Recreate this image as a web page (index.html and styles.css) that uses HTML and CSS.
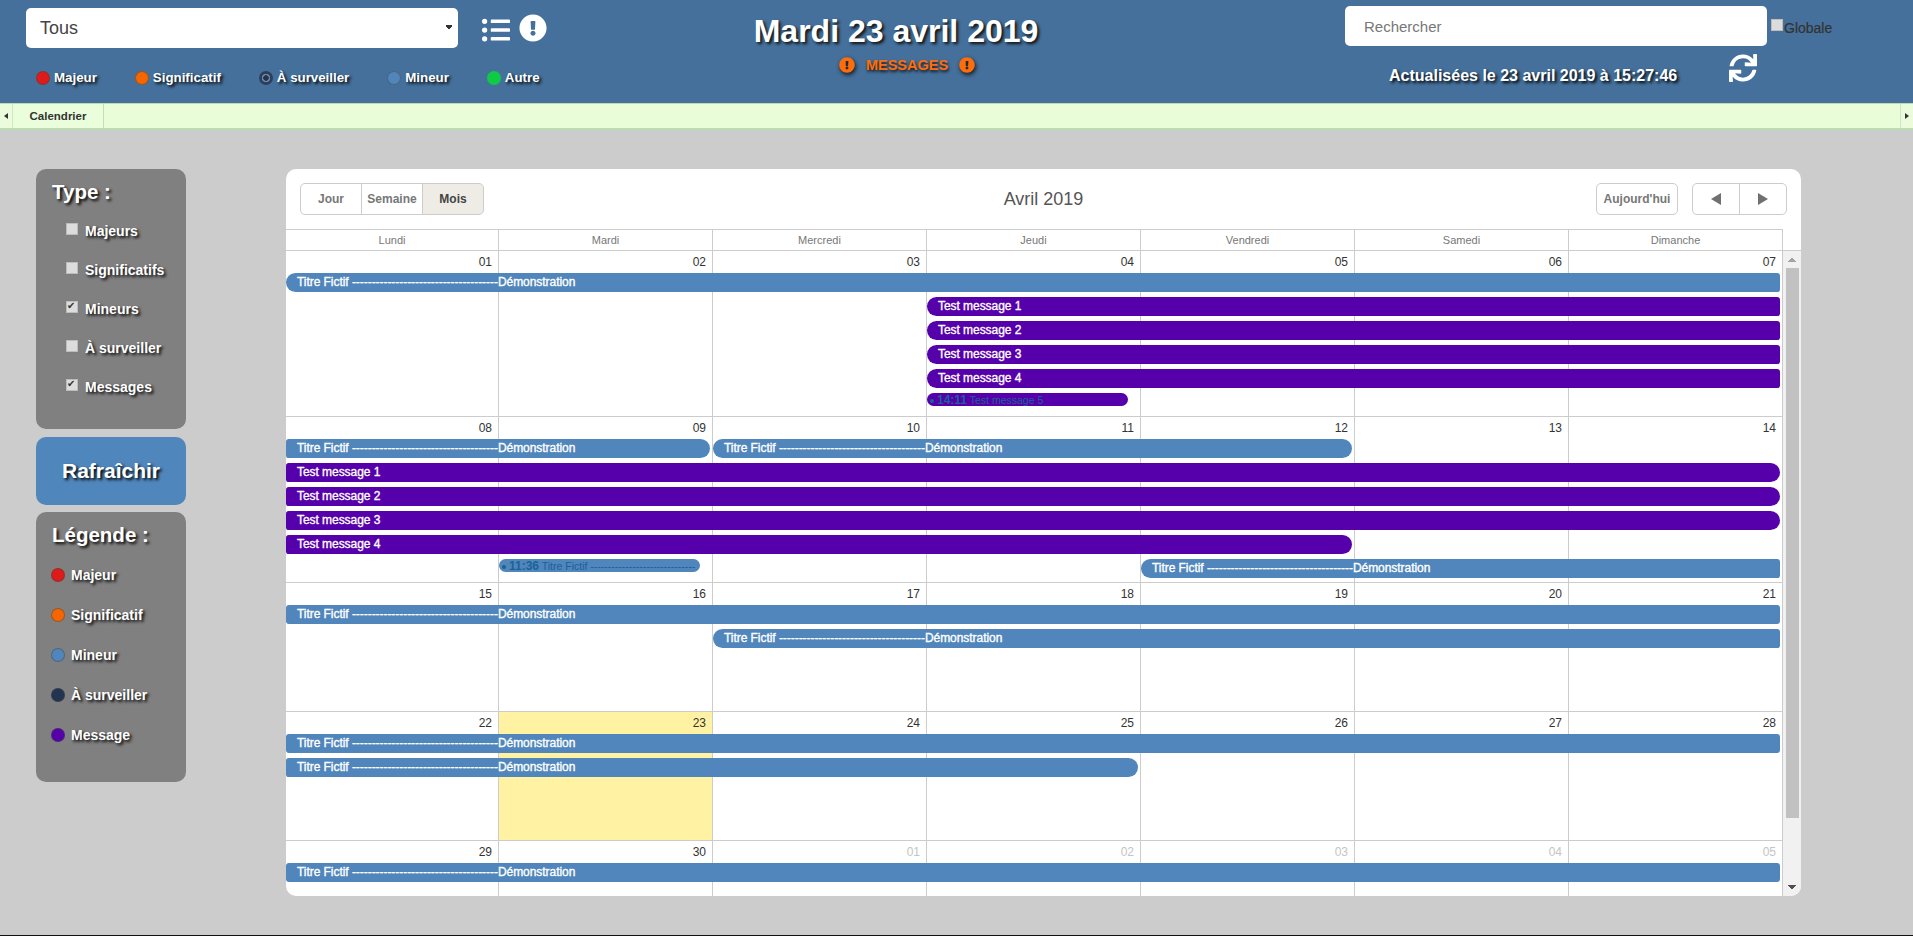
FILE: index.html
```html
<!DOCTYPE html>
<html lang="fr">
<head>
  <meta charset="UTF-8">
  <meta name="viewport" content="width=device-width, initial-scale=1.0">
  <title>Calendrier</title>
  <link rel="stylesheet" href="styles.css">
</head>
<body>
  <header class="topbar">
    <div class="top-left">
      <div class="filter-row">
        <select class="site-select">
          <option>Tous</option>
        </select>
        <svg class="top-icon list-icon" viewBox="0 0 512 512"><path d="M48 48a48 48 0 1 0 48 48 48 48 0 0 0-48-48zm0 160a48 48 0 1 0 48 48 48 48 0 0 0-48-48zm0 160a48 48 0 1 0 48 48 48 48 0 0 0-48-48zm448 16H176a16 16 0 0 0-16 16v32a16 16 0 0 0 16 16h320a16 16 0 0 0 16-16v-32a16 16 0 0 0-16-16zm0-320H176a16 16 0 0 0-16 16v32a16 16 0 0 0 16 16h320a16 16 0 0 0 16-16V80a16 16 0 0 0-16-16zm0 160H176a16 16 0 0 0-16 16v32a16 16 0 0 0 16 16h320a16 16 0 0 0 16-16v-32a16 16 0 0 0-16-16z"/></svg>
        <svg class="top-icon" viewBox="0 0 512 512"><path d="M504 256c0 136.997-111.043 248-248 248S8 392.997 8 256C8 119.083 119.043 8 256 8s248 111.083 248 248zm-248 50c-25.405 0-46 20.595-46 46s20.595 46 46 46 46-20.595 46-46-20.595-46-46-46zm-43.673-165.346l7.418 136c.347 6.364 5.609 11.346 11.982 11.346h48.546c6.373 0 11.635-4.982 11.982-11.346l7.418-136c.375-6.874-5.098-12.654-11.982-12.654h-63.383c-6.884 0-12.356 5.78-11.981 12.654z"/></svg>
      </div>
      <ul class="top-legend">
        <li><span class="dot dot-red"></span>Majeur</li>
        <li><span class="dot dot-orange"></span>Significatif</li>
        <li><span class="dot dot-watch"></span>À surveiller</li>
        <li><span class="dot dot-blue"></span>Mineur</li>
        <li><span class="dot dot-green"></span>Autre</li>
      </ul>
    </div>

    <div class="top-center">
      <h1>Mardi 23 avril 2019</h1>
      <div class="messages">
        <svg class="msg-icon" viewBox="0 0 512 512"><path d="M504 256c0 136.997-111.043 248-248 248S8 392.997 8 256C8 119.083 119.043 8 256 8s248 111.083 248 248zm-248 50c-25.405 0-46 20.595-46 46s20.595 46 46 46 46-20.595 46-46-20.595-46-46-46zm-43.673-165.346l7.418 136c.347 6.364 5.609 11.346 11.982 11.346h48.546c6.373 0 11.635-4.982 11.982-11.346l7.418-136c.375-6.874-5.098-12.654-11.982-12.654h-63.383c-6.884 0-12.356 5.78-11.981 12.654z"/></svg>
        <span>MESSAGES</span>
        <svg class="msg-icon" viewBox="0 0 512 512"><path d="M504 256c0 136.997-111.043 248-248 248S8 392.997 8 256C8 119.083 119.043 8 256 8s248 111.083 248 248zm-248 50c-25.405 0-46 20.595-46 46s20.595 46 46 46 46-20.595 46-46-20.595-46-46-46zm-43.673-165.346l7.418 136c.347 6.364 5.609 11.346 11.982 11.346h48.546c6.373 0 11.635-4.982 11.982-11.346l7.418-136c.375-6.874-5.098-12.654-11.982-12.654h-63.383c-6.884 0-12.356 5.78-11.981 12.654z"/></svg>
      </div>
    </div>

    <div class="top-right">
      <div class="search-row">
        <input class="search" type="text" placeholder="Rechercher">
        <label class="global"><input type="checkbox" class="check">Globale</label>
      </div>
      <div class="update-row">
        <span class="updated">Actualisées le 23 avril 2019 à 15:27:46</span>
        <svg class="top-icon" viewBox="0 0 512 512"><path d="M440.65 12.57l4 82.77A247.16 247.16 0 0 0 255.83 8C134.73 8 33.91 94.92 12.29 209.82A12 12 0 0 0 24.09 224h49.05a12 12 0 0 0 11.67-9.26 175.91 175.91 0 0 1 317-56.94l-101.46-4.86a12 12 0 0 0-12.57 12v47.41a12 12 0 0 0 12 12H500a12 12 0 0 0 12-12V12a12 12 0 0 0-12-12h-47.37a12 12 0 0 0-11.98 12.57zM255.83 432a175.61 175.61 0 0 1-146-77.8l101.8 4.87a12 12 0 0 0 12.57-12v-47.4a12 12 0 0 0-12-12H12a12 12 0 0 0-12 12V500a12 12 0 0 0 12 12h47.35a12 12 0 0 0 12-12.6l-4.15-82.57A247.17 247.17 0 0 0 255.83 504c121.11 0 221.93-86.92 243.55-201.82a12 12 0 0 0-11.8-14.18h-49.05a12 12 0 0 0-11.67 9.26A175.86 175.86 0 0 1 255.83 432z"/></svg>
      </div>
    </div>
  </header>

  <nav class="tabs">
    <span class="tab-arrow"><i class="tri-left"></i></span>
    <a class="tab">Calendrier</a>
    <span class="tab-fill"></span>
    <span class="tab-arrow"><i class="tri-right"></i></span>
  </nav>

  <main class="page">
    <aside class="sidebar">
      <section class="panel panel-type">
        <h2>Type :</h2>
        <label class="type-row"><input type="checkbox" class="check">Majeurs</label>
        <label class="type-row"><input type="checkbox" class="check">Significatifs</label>
        <label class="type-row"><input type="checkbox" class="check" checked>Mineurs</label>
        <label class="type-row"><input type="checkbox" class="check">À surveiller</label>
        <label class="type-row"><input type="checkbox" class="check" checked>Messages</label>
      </section>
      <button class="refresh">Rafraîchir</button>
      <section class="panel panel-legend">
        <h2>Légende :</h2>
        <div class="legend-row"><span class="dot dot-red"></span>Majeur</div>
        <div class="legend-row"><span class="dot dot-orange"></span>Significatif</div>
        <div class="legend-row"><span class="dot dot-blue"></span>Mineur</div>
        <div class="legend-row"><span class="dot dot-navy"></span>À surveiller</div>
        <div class="legend-row"><span class="dot dot-purple"></span>Message</div>
      </section>
    </aside>

    <section class="calendar">
      <div class="toolbar">
        <div class="btn-group">
          <button class="btn">Jour</button>
          <button class="btn">Semaine</button>
          <button class="btn active">Mois</button>
        </div>
        <h3>Avril 2019</h3>
        <div class="toolbar-right">
          <button class="btn btn-today">Aujourd'hui</button>
          <div class="btn-group">
            <button class="btn btn-nav"><i class="nav-prev"></i></button>
            <button class="btn btn-nav"><i class="nav-next"></i></button>
          </div>
        </div>
      </div>

      <div class="day-names">
        <div>Lundi</div><div>Mardi</div><div>Mercredi</div><div>Jeudi</div><div>Vendredi</div><div>Samedi</div><div>Dimanche</div>
      </div>

      <div class="cal-body">
        <div class="weeks">
          <div class="week">
            <div class="day">01</div><div class="day">02</div><div class="day">03</div><div class="day">04</div><div class="day">05</div><div class="day">06</div><div class="day">07</div>
            <div class="ev ev-blue at-1 span-7 line-1 round-l">Titre Fictif -------------------------------------Démonstration</div>
            <div class="ev ev-purple at-4 span-4 line-2 round-l">Test message 1</div>
            <div class="ev ev-purple at-4 span-4 line-3 round-l">Test message 2</div>
            <div class="ev ev-purple at-4 span-4 line-4 round-l">Test message 3</div>
            <div class="ev ev-purple at-4 span-4 line-5 round-l">Test message 4</div>
            <div class="ev-small ev-purple at-4 span-1 line-6"><span class="bullet"></span><b>14:11</b> Test message 5</div>
          </div>

          <div class="week">
            <div class="day">08</div><div class="day">09</div><div class="day">10</div><div class="day">11</div><div class="day">12</div><div class="day">13</div><div class="day">14</div>
            <div class="ev ev-blue at-1 span-2 line-1 round-r">Titre Fictif -------------------------------------Démonstration</div>
            <div class="ev ev-blue at-3 span-3 line-1 round-l round-r">Titre Fictif -------------------------------------Démonstration</div>
            <div class="ev ev-purple at-1 span-7 line-2 round-r">Test message 1</div>
            <div class="ev ev-purple at-1 span-7 line-3 round-r">Test message 2</div>
            <div class="ev ev-purple at-1 span-7 line-4 round-r">Test message 3</div>
            <div class="ev ev-purple at-1 span-5 line-5 round-r">Test message 4</div>
            <div class="ev-small ev-blue at-2 span-1 line-6"><span class="bullet"></span><b>11:36</b> Titre Fictif ------------------------------</div>
            <div class="ev ev-blue at-5 span-3 line-6 round-l">Titre Fictif -------------------------------------Démonstration</div>
          </div>

          <div class="week week-short">
            <div class="day">15</div><div class="day">16</div><div class="day">17</div><div class="day">18</div><div class="day">19</div><div class="day">20</div><div class="day">21</div>
            <div class="ev ev-blue at-1 span-7 line-1">Titre Fictif -------------------------------------Démonstration</div>
            <div class="ev ev-blue at-3 span-5 line-2 round-l">Titre Fictif -------------------------------------Démonstration</div>
          </div>

          <div class="week week-short">
            <div class="day">22</div><div class="day today">23</div><div class="day">24</div><div class="day">25</div><div class="day">26</div><div class="day">27</div><div class="day">28</div>
            <div class="ev ev-blue at-1 span-7 line-1">Titre Fictif -------------------------------------Démonstration</div>
            <div class="ev ev-blue at-1 span-4 line-2 round-r">Titre Fictif -------------------------------------Démonstration</div>
          </div>

          <div class="week week-short">
            <div class="day">29</div><div class="day">30</div><div class="day other">01</div><div class="day other">02</div><div class="day other">03</div><div class="day other">04</div><div class="day other">05</div>
            <div class="ev ev-blue at-1 span-7 line-1">Titre Fictif -------------------------------------Démonstration</div>
          </div>
        </div>

        <div class="scrollbar">
          <span class="scroll-arrow scroll-up"></span>
          <div class="scroll-track"><div class="scroll-thumb"></div></div>
          <span class="scroll-arrow scroll-down"></span>
        </div>
      </div>
    </section>
  </main>
</body>
</html>
```

FILE: styles.css
```css
* {
  box-sizing: border-box;
}
html, body {
  height: 100%;
}
body {
  margin: 0;
  height: 936px;
  overflow: hidden;
  font-family: "Liberation Sans", Arial, sans-serif;
  background-color: #ccc;
  border-bottom: 1px solid #111;
  color: #333;
}

/* top bar */
.topbar {
  height: 103px;
  background-color: #44709b;
  display: grid;
  grid-template-columns: 596px 600px 1fr;
  color: white;
}
.top-left {
  padding: 8px 0 0 26px;
}
.filter-row {
  display: flex;
  align-items: center;
  gap: 9px;
}
.site-select {
  appearance: none;
  width: 432px;
  height: 40px;
  background-color: white;
  background-image: conic-gradient(from -39deg at 50% 100%, #333 78deg, transparent 0);
  background-repeat: no-repeat;
  background-size: 6px 5px;
  background-position: 420px 17px;
  border: none;
  border-radius: 5px;
  padding: 0 14px;
  font-family: inherit;
  font-size: 18px;
  color: #444;
  margin-right: 15px;
}
.top-icon {
  width: 28px;
  height: 28px;
  fill: white;
  flex: none;
}
.list-icon {
  margin-top: 4px;
}
.top-legend {
  list-style: none;
  margin: 22px 0 0;
  padding: 0 0 0 10px;
  display: flex;
  gap: 38px;
  font-size: 13.3px;
  font-weight: bold;
  line-height: 16px;
  text-shadow: 2px 2px 3px #000;
}
.top-legend li {
  display: flex;
  align-items: center;
  gap: 4px;
}
.dot {
  display: inline-block;
  width: 14px;
  height: 14px;
  border-radius: 50%;
  border: 1px solid rgba(70, 70, 70, 0.5);
  flex: none;
}
.dot-red { background-color: #df1a1a; }
.dot-orange { background-color: #f56600; }
.dot-blue { background-color: #5086bb; }
.dot-green { background-color: #0ecb45; border-color: transparent; }
.dot-navy { background-color: #22344f; }
.dot-purple { background-color: #5500aa; }
.dot-watch {
  border: none;
  background: radial-gradient(circle, #22344f 0 2.5px, #6c87a3 3px 4px, #2c3f5c 4.5px);
}

.top-center {
  text-align: center;
  padding-top: 13px;
}
h1 {
  margin: 0;
  font-size: 32px;
  line-height: 37px;
  font-weight: bold;
  text-shadow: 2px 2px 3px #111;
}
.messages {
  margin-top: 6px;
  padding-left: 22px;
  display: flex;
  justify-content: center;
  align-items: center;
  gap: 11px;
  color: #ff6d0a;
  font-size: 14.5px;
  line-height: 18px;
  font-weight: bold;
  text-shadow: 1px 2px 3px #111;
}
.msg-icon {
  width: 16px;
  height: 16px;
  fill: #ff6d0a;
  filter: drop-shadow(1px 2px 2px #111);
}

.top-right {
  padding: 6px 0 0 149px;
}
.search-row {
  display: flex;
}
.search {
  width: 422px;
  height: 40px;
  border: none;
  border-radius: 5px;
  padding: 0 19px;
  font-family: inherit;
  font-size: 15px;
  margin-right: 4px;
}
.search::placeholder {
  color: #777;
}
.global {
  display: flex;
  align-items: flex-start;
  gap: 1px;
  padding-top: 14px;
  font-size: 14px;
  line-height: 16px;
  color: #333;
  -webkit-text-stroke: 0.2px #333;
}
.global .check {
  margin-top: -1px;
}
.update-row {
  display: flex;
  align-items: flex-start;
  padding: 8px 0 0 44px;
  gap: 52px;
}
.updated {
  font-size: 16px;
  line-height: 18px;
  margin-top: 13px;
  font-weight: bold;
  white-space: nowrap;
  text-shadow: 2px 2px 3px #000;
}

/* checkboxes */
.check {
  appearance: none;
  width: 12px;
  height: 12px;
  margin: 0;
  background-color: #dcdcdc;
  border: 1px solid #bdbdbd;
  box-shadow: 0 0 1px #777;
  position: relative;
  flex: none;
}
.check:checked::after {
  content: "✔";
  position: absolute;
  top: -3px;
  left: 0;
  font-family: "DejaVu Sans", sans-serif;
  font-size: 10px;
  line-height: 14px;
  color: #333;
  text-shadow: none;
}

/* tabs */
.tabs {
  height: 27px;
  background-color: #e8fdd8;
  border-top: 1px solid #bcdcb4;
  border-bottom: 2px solid #bcdcb4;
  display: flex;
  font-size: 11.5px;
  font-weight: bold;
}
.tab-arrow {
  width: 13px;
  display: flex;
  align-items: center;
  justify-content: center;
  background-color: #eafcdc;
}
.tab-arrow:first-child {
  border-right: 1px solid #cfe6c8;
}
.tab-arrow:last-child {
  border-left: 1px solid #cfe6c8;
}
.tri-left, .tri-right {
  width: 0;
  height: 0;
  border-top: 3.5px solid transparent;
  border-bottom: 3.5px solid transparent;
}
.tri-left { border-right: 4px solid #333; }
.tri-right { border-left: 4px solid #333; }
.tab {
  width: 91px;
  text-align: center;
  line-height: 24px;
  color: #333;
  background-color: #eafedc;
  border-right: 1px solid #c4dcc0;
}
.tab-fill {
  flex: 1;
}

/* page */
.page {
  display: flex;
  align-items: flex-start;
  padding: 39px 0 0 36px;
  gap: 100px;
}
.sidebar {
  width: 150px;
  display: flex;
  flex-direction: column;
  gap: 8px;
  flex: none;
}
.panel {
  background-color: #808080;
  border-radius: 10px;
  color: white;
  font-weight: bold;
  font-size: 14px;
  text-shadow: 2px 2px 3px #000;
}
.panel h2 {
  margin: 0;
  font-size: 20.5px;
  line-height: 24px;
}
.panel-type {
  height: 260px;
  padding: 11px 0 0 16px;
}
.type-row {
  display: flex;
  align-items: center;
  height: 39px;
  margin-left: 14px;
  gap: 7px;
}
.type-row:first-of-type {
  margin-top: 7px;
}
.type-row .check {
  margin-top: -3px;
}
.refresh {
  height: 68px;
  background-color: #4f86bb;
  color: white;
  border: none;
  border-radius: 10px;
  font-family: inherit;
  font-size: 21px;
  font-weight: bold;
  text-shadow: 2px 2px 3px #000;
  padding: 0;
}
.panel-legend {
  height: 270px;
  margin-top: -1px;
  padding: 11px 0 0 16px;
}
.legend-row {
  display: flex;
  align-items: center;
  height: 40px;
  margin-left: -1px;
  gap: 6px;
}
.legend-row:first-of-type {
  margin-top: 8px;
}

/* calendar */
.calendar {
  width: 1515px;
  height: 727px;
  background-color: white;
  border-radius: 10px;
  overflow: hidden;
  display: flex;
  flex-direction: column;
}
.toolbar {
  height: 60px;
  padding: 14px 14px 0;
  display: grid;
  grid-template-columns: 1fr auto 1fr;
  align-items: start;
}
.toolbar h3 {
  margin: 0;
  font-size: 18px;
  font-weight: normal;
  line-height: 32px;
  color: #555;
}
.toolbar-right {
  display: flex;
  justify-content: flex-end;
  gap: 14px;
}
.btn-group {
  display: flex;
}
.btn {
  height: 32px;
  width: 62px;
  background-color: white;
  border: 1px solid #ccc;
  border-radius: 0;
  margin-left: -1px;
  padding: 0;
  font-family: inherit;
  font-size: 12px;
  font-weight: bold;
  color: #777;
}
.btn-group .btn:first-child {
  margin-left: 0;
  border-radius: 5px 0 0 5px;
}
.btn-group .btn:last-child {
  border-radius: 0 5px 5px 0;
}
.btn.active {
  background-color: #efece6;
  color: #444;
}
.btn-today {
  width: 82px;
  margin-left: 0;
  border-radius: 5px;
}
.btn-group .btn.btn-nav {
  width: 48px;
  display: flex;
  align-items: center;
  justify-content: center;
}
.nav-prev, .nav-next {
  width: 0;
  height: 0;
  border-top: 6px solid transparent;
  border-bottom: 6px solid transparent;
}
.nav-prev { border-right: 10px solid #707070; }
.nav-next { border-left: 10px solid #707070; }

.day-names {
  display: grid;
  grid-template-columns: 213px repeat(6, 214px);
  height: 21px;
  width: 1497px;
  border-top: 1px solid #ccc;
  font-size: 11px;
  line-height: 20px;
  color: #777;
  text-align: center;
}
.day-names div {
  border-right: 1px solid #ccc;
}

.cal-body {
  flex: 1;
  min-height: 0;
  display: flex;
}
.weeks {
  width: 1497px;
  overflow: hidden;
}

/* scrollbar */
.scrollbar {
  width: 18px;
  background-color: #f1f1f1;
  border-top: 1px solid #ccc;
  display: flex;
  flex-direction: column;
}
.scroll-arrow {
  height: 17px;
  flex: none;
  background-repeat: no-repeat;
  background-position: center;
  background-size: 8px 5px;
}
.scroll-up {
  background-image: conic-gradient(from 141deg at 50% 0, #a3a3a3 78deg, transparent 0);
}
.scroll-down {
  background-image: conic-gradient(from -39deg at 50% 100%, #505050 78deg, transparent 0);
}
.scroll-track {
  flex: 1;
}
.scroll-thumb {
  height: 550px;
  margin: 0 2px 0 3px;
  background-color: #c1c1c1;
}

.week {
  display: grid;
  grid-template-columns: 213px repeat(6, 214px);
  grid-template-rows: 22px repeat(5, 24px) 1fr;
  height: 166px;
  border-top: 1px solid #ccc;
}
.week-short {
  grid-template-rows: 22px 24px 1fr;
  height: 129px;
}
.day {
  grid-row: 1 / -1;
  border-right: 1px solid #ccc;
  padding: 4px 6px 0 0;
  text-align: right;
  font-size: 12px;
  line-height: 14px;
  color: #333;
}
.day:nth-child(1) { grid-column: 1; }
.day:nth-child(2) { grid-column: 2; }
.day:nth-child(3) { grid-column: 3; }
.day:nth-child(4) { grid-column: 4; }
.day:nth-child(5) { grid-column: 5; }
.day:nth-child(6) { grid-column: 6; }
.day:nth-child(7) { grid-column: 7; }
.today {
  background-color: #fff2a3;
}
.other {
  color: #c4c4c4;
}

/* events */
.ev, .ev-small {
  align-self: start;
  margin-right: 3px;
  border-radius: 3px;
  white-space: nowrap;
  overflow: hidden;
}
.ev {
  height: 19px;
  line-height: 19px;
  padding-left: 11px;
  font-size: 12px;
  letter-spacing: -0.05px;
  color: white;
  -webkit-text-stroke: 0.35px white;
}
.ev-small {
  height: 13px;
  margin-right: 13px;
  border-radius: 7px;
  padding-left: 3px;
  font-size: 10.5px;
  line-height: 15px;
  color: #1a6296;
}
.ev-small b {
  font-size: 12px;
}
.bullet {
  display: inline-block;
  width: 4px;
  height: 4px;
  margin: 0 3px 1px 0;
  border-radius: 50%;
  background-color: #1a6296;
}
.ev-blue { background-color: #5086bb; }
.ev-purple { background-color: #5500aa; }
.round-l {
  border-top-left-radius: 10px;
  border-bottom-left-radius: 10px;
}
.round-r {
  border-top-right-radius: 10px;
  border-bottom-right-radius: 10px;
}
.at-1 { grid-column-start: 1; }
.at-2 { grid-column-start: 2; }
.at-3 { grid-column-start: 3; }
.at-4 { grid-column-start: 4; }
.at-5 { grid-column-start: 5; }
.span-1 { grid-column-end: span 1; }
.span-2 { grid-column-end: span 2; }
.span-3 { grid-column-end: span 3; }
.span-4 { grid-column-end: span 4; }
.span-5 { grid-column-end: span 5; }
.span-7 { grid-column-end: span 7; }
.line-1 { grid-row: 2; }
.line-2 { grid-row: 3; }
.line-3 { grid-row: 4; }
.line-4 { grid-row: 5; }
.line-5 { grid-row: 6; }
.line-6 { grid-row: 7; }
```
